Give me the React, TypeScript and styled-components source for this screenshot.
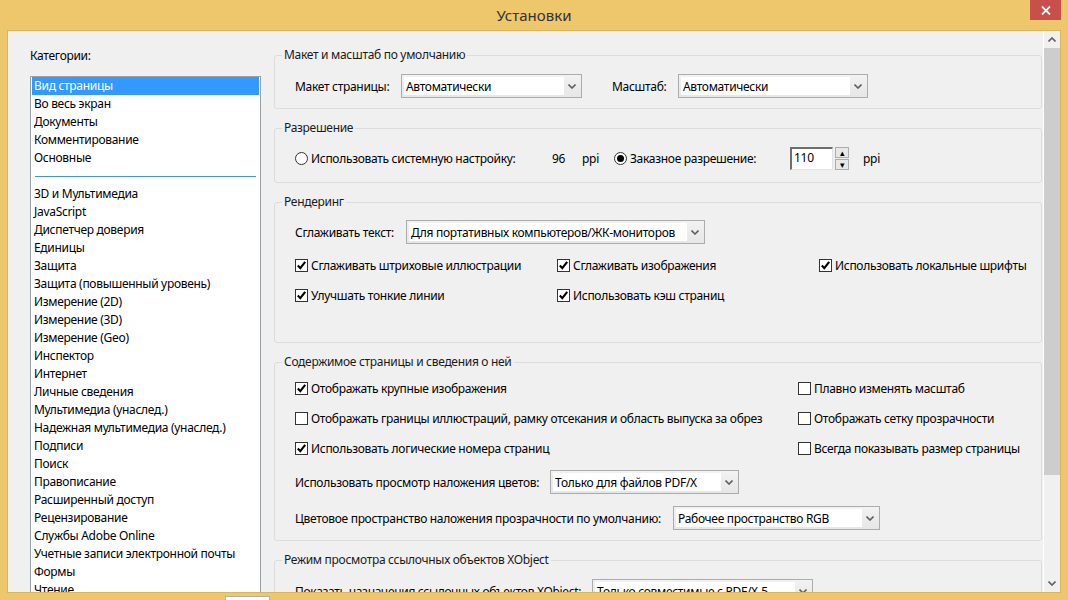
import styled, { createGlobalStyle } from "styled-components"

const GlobalStyle = createGlobalStyle`
  html, body {
    margin: 0;
    padding: 0;
    background: #eec66c;
  }
  body {
    font-family: "Noto Sans", "Open Sans", sans-serif;
    font-size: 12px;
    letter-spacing: -0.3px;
    color: #000;
  }
`

const categories = [
    "Вид страницы",
    "Во весь экран",
    "Документы",
    "Комментирование",
    "Основные",
    "-",
    "3D и Мультимедиа",
    "JavaScript",
    "Диспетчер доверия",
    "Единицы",
    "Защита",
    "Защита (повышенный уровень)",
    "Измерение (2D)",
    "Измерение (3D)",
    "Измерение (Geo)",
    "Инспектор",
    "Интернет",
    "Личные сведения",
    "Мультимедиа (унаслед.)",
    "Надежная мультимедиа (унаслед.)",
    "Подписи",
    "Поиск",
    "Правописание",
    "Расширенный доступ",
    "Рецензирование",
    "Службы Adobe Online",
    "Учетные записи электронной почты",
    "Формы",
    "Чтение",
]

function Chevron({ up }: { up?: boolean }) {
    return (
        <svg width="8" height="5" viewBox="0 0 8 5">
            <path
                d={up ? "M0.5 4.5 L4 1 L7.5 4.5" : "M0.5 0.5 L4 4 L7.5 0.5"}
                fill="none"
                stroke="#606060"
                strokeWidth="1.6"
            />
        </svg>
    )
}

function Combo({ width, value }: { width: number; value: string }) {
    return (
        <ComboBox $w={width}>
            <ComboField>{value}</ComboField>
            <ComboArrow>
                <Chevron />
            </ComboArrow>
        </ComboBox>
    )
}

function Check({ checked, label }: { checked?: boolean; label: string }) {
    return (
        <Option>
            <CheckBox>
                {checked && (
                    <svg width="11" height="11" viewBox="0 0 11 11">
                        <path
                            d="M1.8 5.6 L4.3 8.2 L9.2 1.8"
                            fill="none"
                            stroke="#000"
                            strokeWidth="2.1"
                        />
                    </svg>
                )}
            </CheckBox>
            {label}
        </Option>
    )
}

function Radio({ checked, label }: { checked?: boolean; label: string }) {
    return (
        <Option>
            <RadioCircle>{checked && <RadioDot />}</RadioCircle>
            {label}
        </Option>
    )
}

export default function App() {
    return (
        <>
            <GlobalStyle />
            <Window>
                <TitleBar>
                    <Title>Установки</Title>
                    <CloseButton>
                        <svg width="10" height="9" viewBox="0 0 10 9">
                            <path
                                d="M1 0.5 L9 8.5 M9 0.5 L1 8.5"
                                stroke="#fff"
                                strokeWidth="1.8"
                            />
                        </svg>
                    </CloseButton>
                </TitleBar>

                <Client>
                    <LeftPane>
                        <PaneLabel>Категории:</PaneLabel>
                        <ListBox>
                            {categories.map((c, i) =>
                                c === "-" ? (
                                    <Separator key={i} />
                                ) : (
                                    <ListItem key={i} $selected={i === 0}>
                                        {c}
                                    </ListItem>
                                )
                            )}
                        </ListBox>
                    </LeftPane>

                    <RightPane>
                        <Group>
                            <Legend>Макет и масштаб по умолчанию</Legend>
                            <GroupBody $top={11} $bottom={10}>
                                <Row $h={24}>
                                    <Cell $w={106}>Макет страницы:</Cell>
                                    <Combo width={181} value="Автоматически" />
                                    <Cell $w={66} $ml={30}>
                                        Масштаб:
                                    </Cell>
                                    <Combo width={190} value="Автоматически" />
                                </Row>
                            </GroupBody>
                        </Group>

                        <Group>
                            <Legend>Разрешение</Legend>
                            <GroupBody $top={10} $bottom={12}>
                                <Row $h={24}>
                                    <Cell $w={257}>
                                        <Radio label="Использовать системную настройку:" />
                                    </Cell>
                                    <Cell $w={30}>96</Cell>
                                    <Cell $w={32}>ppi</Cell>
                                    <Cell $w={176}>
                                        <Radio
                                            checked
                                            label="Заказное разрешение:"
                                        />
                                    </Cell>
                                    <NumberInput>110</NumberInput>
                                    <Spinner>
                                        <SpinButton>▴</SpinButton>
                                        <SpinButton>▾</SpinButton>
                                    </Spinner>
                                    <Cell $ml={14}>ppi</Cell>
                                </Row>
                            </GroupBody>
                        </Group>

                        <Group>
                            <Legend>Рендеринг</Legend>
                            <GroupBody $top={10} $bottom={32}>
                                <Row $h={24}>
                                    <Cell $w={111}>Сглаживать текст:</Cell>
                                    <Combo
                                        width={299}
                                        value="Для портативных компьютеров/ЖК-мониторов"
                                    />
                                </Row>
                                <Row $h={30} $mt={6}>
                                    <Cell $w={262}>
                                        <Check
                                            checked
                                            label="Сглаживать штриховые иллюстрации"
                                        />
                                    </Cell>
                                    <Cell $w={262}>
                                        <Check
                                            checked
                                            label="Сглаживать изображения"
                                        />
                                    </Cell>
                                    <Cell>
                                        <Check
                                            checked
                                            label="Использовать локальные шрифты"
                                        />
                                    </Cell>
                                </Row>
                                <Row $h={30}>
                                    <Cell $w={262}>
                                        <Check
                                            checked
                                            label="Улучшать тонкие линии"
                                        />
                                    </Cell>
                                    <Cell>
                                        <Check
                                            checked
                                            label="Использовать кэш страниц"
                                        />
                                    </Cell>
                                </Row>
                            </GroupBody>
                        </Group>

                        <Group>
                            <Legend>Содержимое страницы и сведения о ней</Legend>
                            <GroupBody $top={3} $bottom={10}>
                                <Row $h={30}>
                                    <Cell $w={503}>
                                        <Check
                                            checked
                                            label="Отображать крупные изображения"
                                        />
                                    </Cell>
                                    <Cell>
                                        <Check label="Плавно изменять масштаб" />
                                    </Cell>
                                </Row>
                                <Row $h={30}>
                                    <Cell $w={503}>
                                        <Check label="Отображать границы иллюстраций, рамку отсекания и область выпуска за обрез" />
                                    </Cell>
                                    <Cell>
                                        <Check label="Отображать сетку прозрачности" />
                                    </Cell>
                                </Row>
                                <Row $h={30}>
                                    <Cell $w={503}>
                                        <Check
                                            checked
                                            label="Использовать логические номера страниц"
                                        />
                                    </Cell>
                                    <Cell>
                                        <Check label="Всегда показывать размер страницы" />
                                    </Cell>
                                </Row>
                                <Row $h={24} $mt={7}>
                                    <Cell $w={255}>
                                        Использовать просмотр наложения цветов:
                                    </Cell>
                                    <Combo
                                        width={189}
                                        value="Только для файлов PDF/X"
                                    />
                                </Row>
                                <Row $h={24} $mt={12}>
                                    <Cell $w={378}>
                                        Цветовое пространство наложения
                                        прозрачности по умолчанию:
                                    </Cell>
                                    <Combo
                                        width={207}
                                        value="Рабочее пространство RGB"
                                    />
                                </Row>
                            </GroupBody>
                        </Group>

                        <Group>
                            <Legend>
                                Режим просмотра ссылочных объектов XObject
                            </Legend>
                            <GroupBody $top={11} $bottom={10}>
                                <Row $h={24}>
                                    <Cell $w={297}>
                                        Показать назначения ссылочных объектов
                                        XObject:
                                    </Cell>
                                    <Combo
                                        width={221}
                                        value="Только совместимые с PDF/X-5"
                                    />
                                </Row>
                            </GroupBody>
                        </Group>
                    </RightPane>

                    <ScrollBar>
                        <ScrollArrow>
                            <Chevron up />
                        </ScrollArrow>
                        <ScrollThumb />
                        <ScrollTrack />
                        <ScrollArrow>
                            <Chevron />
                        </ScrollArrow>
                    </ScrollBar>
                </Client>
                <BottomTab />
            </Window>
        </>
    )
}

const Window = styled.div`
    position: relative;
    width: 1068px;
    height: 600px;
    display: flex;
    flex-direction: column;
    background: #eec66c;
    overflow: hidden;
`

const TitleBar = styled.div`
    position: relative;
    height: 31px;
    display: flex;
    align-items: center;
    justify-content: center;
    flex-shrink: 0;
`

const Title = styled.div`
    font-size: 15px;
    letter-spacing: 0;
    color: #333;
    margin-top: -1px;
`

const CloseButton = styled.div`
    position: absolute;
    top: 0;
    right: 7px;
    width: 31px;
    height: 20px;
    background: #c7504b;
    display: flex;
    align-items: center;
    justify-content: center;
`

const Client = styled.div`
    flex: 1;
    margin: 0 8px 8px 8px;
    background: #f0f0f0;
    display: flex;
    overflow: hidden;
    box-shadow: 0 0 0 1px #dbb45c;
`

const LeftPane = styled.div`
    width: 266px;
    flex-shrink: 0;
    padding: 17px 0 0 22px;
    box-sizing: border-box;
    overflow: hidden;
`

const PaneLabel = styled.div`
    line-height: 16px;
    margin-bottom: 12px;
`

const ListBox = styled.div`
    width: 231px;
    box-sizing: border-box;
    background: #fff;
    border: 1px solid #9a9ea6;
    padding: 0 1px;
`

const ListItem = styled.div<{ $selected?: boolean }>`
    height: 18px;
    line-height: 18px;
    padding-left: 2px;
    white-space: nowrap;
    background: ${({ $selected }) => ($selected ? "#3399ff" : "transparent")};
    color: ${({ $selected }) => ($selected ? "#fff" : "#000")};
`

const Separator = styled.div`
    height: 18px;
    display: flex;
    align-items: center;
    padding: 0 3px;

    &::after {
        content: "";
        flex: 1;
        height: 1px;
        background: #4a90d9;
    }
`

const RightPane = styled.div`
    flex: 1;
    padding: 16px 1px 0 0;
    overflow: hidden;
`

const Group = styled.fieldset`
    margin: 0 0 11px 0;
    padding: 0;
    border: 1px solid #dcdcdc;
    border-radius: 3px;
    min-width: 0;
`

const Legend = styled.legend`
    margin-left: 7px;
    padding: 0 2px;
    line-height: 16px;
    color: #1a1a1a;
`

const GroupBody = styled.div<{ $top: number; $bottom: number }>`
    padding: ${({ $top, $bottom }) => `${$top}px 0 ${$bottom}px 20px`};
`

const Row = styled.div<{ $h: number; $mt?: number }>`
    display: flex;
    align-items: center;
    height: ${({ $h }) => $h}px;
    margin-top: ${({ $mt }) => $mt ?? 0}px;
    white-space: nowrap;
`

const Cell = styled.div<{ $w?: number; $ml?: number }>`
    width: ${({ $w }) => ($w ? `${$w}px` : "auto")};
    margin-left: ${({ $ml }) => $ml ?? 0}px;
    flex-shrink: 0;
    display: flex;
    align-items: center;
`

const ComboBox = styled.div<{ $w: number }>`
    width: ${({ $w }) => $w}px;
    height: 24px;
    box-sizing: border-box;
    border: 1px solid #acacac;
    background: linear-gradient(#f2f2f2, #e6e6e6);
    display: flex;
    align-items: center;
    padding: 2px;
    flex-shrink: 0;
`

const ComboField = styled.div`
    flex: 1;
    height: 100%;
    background: #fff;
    display: flex;
    align-items: center;
    padding-left: 2px;
    overflow: hidden;
`

const ComboArrow = styled.div`
    width: 15px;
    display: flex;
    justify-content: center;
    align-items: center;
`

const Option = styled.div`
    display: flex;
    align-items: center;
    gap: 3px;
`

const CheckBox = styled.div`
    width: 13px;
    height: 13px;
    box-sizing: border-box;
    border: 1px solid #333;
    background: #fff;
    display: flex;
    align-items: center;
    justify-content: center;
`

const RadioCircle = styled.div`
    width: 13px;
    height: 13px;
    box-sizing: border-box;
    border: 1px solid #333;
    border-radius: 50%;
    background: #fff;
    display: flex;
    align-items: center;
    justify-content: center;
`

const RadioDot = styled.div`
    width: 7px;
    height: 7px;
    border-radius: 50%;
    background: #000;
`

const NumberInput = styled.div`
    width: 43px;
    height: 23px;
    box-sizing: border-box;
    background: #fff;
    border-style: solid;
    border-width: 2px 1px 1px 2px;
    border-color: #6e6e6e #e3e3e3 #e3e3e3 #6e6e6e;
    padding-left: 2px;
    line-height: 18px;
`

const Spinner = styled.div`
    margin-left: 2px;
    width: 14px;
    height: 23px;
    display: flex;
    flex-direction: column;
    gap: 1px;
`

const SpinButton = styled.div`
    flex: 1;
    box-sizing: border-box;
    border: 1px solid #acacac;
    background: #e8e8e8;
    font-size: 9px;
    line-height: 9px;
    text-align: center;
    color: #000;
`

const ScrollBar = styled.div`
    width: 17px;
    flex-shrink: 0;
    display: flex;
    flex-direction: column;
    border-left: 1px solid #fff;
    box-sizing: border-box;
`

const ScrollArrow = styled.div`
    height: 17px;
    display: flex;
    align-items: center;
    justify-content: center;
`

const ScrollThumb = styled.div`
    height: 427px;
    background: #cdcdcd;
`

const ScrollTrack = styled.div`
    flex: 1;
`

const BottomTab = styled.div`
    position: absolute;
    left: 225px;
    bottom: 0;
    width: 43px;
    height: 3px;
    background: #fff;
    border: 1px solid #b0b0b0;
    border-bottom: none;
`
